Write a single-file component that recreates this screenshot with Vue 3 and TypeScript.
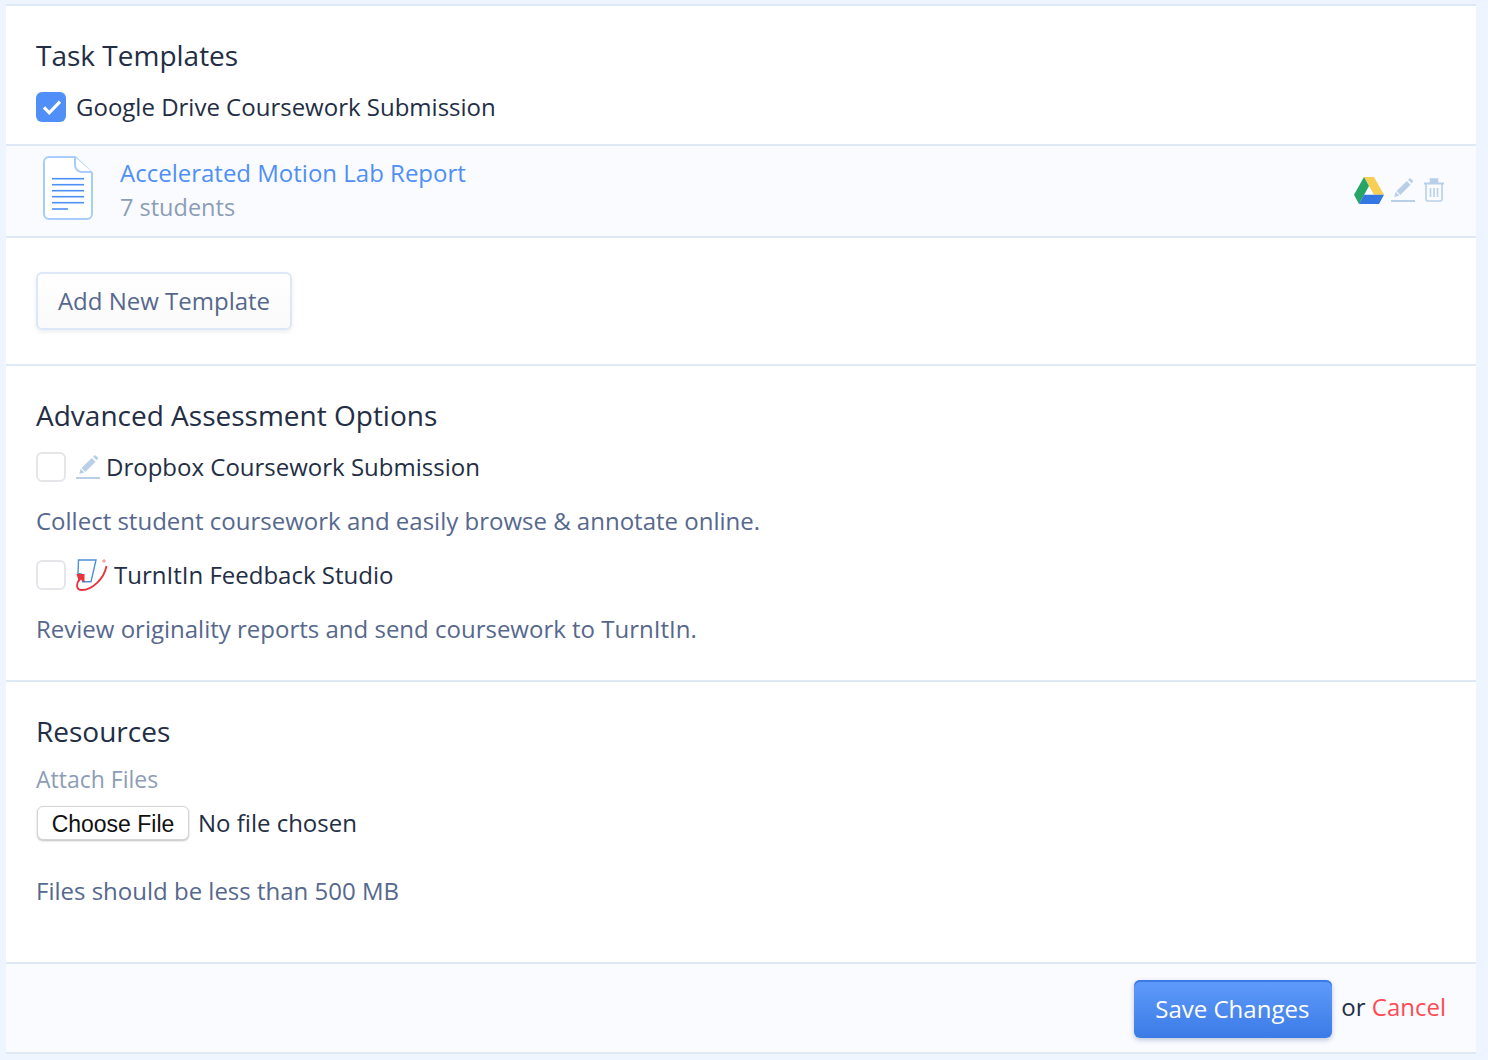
<script setup lang="ts">
const lines: number[] = [22.7, 28.7, 34.7, 40.7, 46.7]
</script>

<template>
  <div class="page">
    <form class="card">
      <section class="sec sec-task">
        <h2>Task Templates</h2>
        <label class="check-row">
          <span class="box on">
            <svg viewBox="0 0 30 30" width="30" height="30"><path d="M8 15.300l5.300 5.500L24 9.700" fill="none" stroke="#fff" stroke-width="3.200" /></svg>
          </span>
          <span>Google Drive Coursework Submission</span>
        </label>
      </section>

      <div class="tpl">
        <svg class="doc" viewBox="0 0 50 64" width="50" height="64">
          <path d="M6 1h26l17 16v41a5 5 0 0 1-5 5H6a5 5 0 0 1-5-5V6a5 5 0 0 1 5-5z" fill="#fff" stroke="#a9cdfb" stroke-width="2" />
          <path d="M32 1v8a7 7 0 0 0 7 7h10" fill="#fff" stroke="#a9cdfb" stroke-width="2" />
          <path v-for="y in lines" :key="y" :d="`M9 ${y}h32`" stroke="#4d8ff5" stroke-width="1.600" />
          <path d="M9 53h16" stroke="#4d8ff5" stroke-width="1.600" />
        </svg>
        <div class="tpl-text">
          <a class="tpl-name">Accelerated Motion Lab Report</a>
          <div class="tpl-sub">7 students</div>
        </div>
        <div class="tpl-actions">
          <svg class="drive" viewBox="0 0 30 26" width="30" height="27" preserveAspectRatio="none">
            <path d="M10 0h10l10 17h-10z" fill="#f8cf55" />
            <path d="M10 0l5 8.600L5 26 0 17z" fill="#27a567" />
            <path d="M5 26l5-9h20l-5 9z" fill="#3477e3" />
          </svg>
          <svg class="pen" viewBox="0 0 24 24" width="24" height="24">
            <path d="M3.200 19l1.500-5.200 3.700 3.700z" fill="#b9cfe8" />
            <path d="M5.500 13L15.800 2.900l3.800 3.800L9.300 17z" fill="#b9cfe8" />
            <path d="M17 1.700l1-1a1.500 1.500 0 0 1 2 0l1.600 1.600a1.500 1.500 0 0 1 0 2l-1 1z" fill="#b9cfe8" />
            <path d="M0 23h24" stroke="#b9cfe8" stroke-width="2" />
          </svg>
          <svg class="trash" viewBox="0 0 22 24" width="22" height="24" fill="none" stroke="#b9cfe8" stroke-width="1.600">
            <path d="M1 5.500h20" stroke-width="2" />
            <path d="M7.500 1h7v3.500h-7z" fill="#b9cfe8" />
            <path d="M3 6v15a2 2 0 0 0 2 2h12a2 2 0 0 0 2-2V6" />
            <path d="M7.500 10v9M11 10v9M14.500 10v9" />
          </svg>
        </div>
      </div>

      <section class="sec sec-add">
        <button type="button" class="btn-add">Add New Template</button>
      </section>

      <section class="sec sec-adv">
        <h2>Advanced Assessment Options</h2>
        <label class="check-row">
          <span class="box"></span>
          <svg class="pen" viewBox="0 0 24 24" width="24" height="24">
            <path d="M3.200 19l1.500-5.200 3.700 3.700z" fill="#b9cfe8" />
            <path d="M5.500 13L15.800 2.900l3.800 3.800L9.300 17z" fill="#b9cfe8" />
            <path d="M17 1.700l1-1a1.500 1.500 0 0 1 2 0l1.600 1.600a1.500 1.500 0 0 1 0 2l-1 1z" fill="#b9cfe8" />
            <path d="M0 23h24" stroke="#b9cfe8" stroke-width="2" />
          </svg>
          <span>Dropbox Coursework Submission</span>
        </label>
        <p class="desc">Collect student coursework and easily browse &amp; annotate online.</p>
        <label class="check-row">
          <span class="box"></span>
          <svg class="tii" viewBox="0 0 32 32" width="32" height="32">
            <path d="M2.500 1h17.500L15 22.700H6.500L5.500 15 2 14.500z" fill="#fff" stroke="#4f8fd6" stroke-width="1.400" />
            <path d="M.5 15h8v8.500L5 20.500 3 23z" fill="#e8323c" />
            <path d="M3.500 20C-.5 26 .5 31 6 31c10 0 22-11 24.500-24" fill="none" stroke="#e8323c" stroke-width="1.800" />
            <circle cx="28" cy="2" r="1.200" fill="none" stroke="#e8323c" stroke-width=".6" />
          </svg>
          <span>TurnItIn Feedback Studio</span>
        </label>
        <p class="desc">Review originality reports and send coursework to TurnItIn.</p>
      </section>

      <section class="sec sec-res">
        <h2>Resources</h2>
        <div class="attach">Attach Files</div>
        <div class="file-row">
          <button type="button" class="btn-file">Choose File</button>
          <span>No file chosen</span>
        </div>
        <p class="desc hint">Files should be less than 500 MB</p>
      </section>

      <footer class="foot">
        <button type="button" class="btn-save">Save Changes</button>
        <span class="or">or <a class="cancel">Cancel</a></span>
      </footer>
    </form>
  </div>
</template>

<style>
html, body { background: #eff5fe; }
</style>

<style scoped>
.page {
  box-sizing: border-box;
  height: 1060px;
  padding: 4px 12px 6px 6px;
  overflow: hidden;
  font-family: "Open Sans", sans-serif;
  font-size: 24px;
  line-height: 36px;
  color: #232e45;
}
.card {
  background: #fff;
  border-top: 2px solid #dfe9f6;
  border-bottom: 2px solid #dfe9f6;
}
.sec { box-sizing: border-box; padding: 0 30px; }
.sec + .sec { border-top: 2px solid #dfe9f6; }
h2 {
  margin: 0 0 14px;
  font-size: 28px;
  line-height: 40px;
  font-weight: 400;
  color: #232e45;
}
.sec-task { height: 138px; padding-top: 29px; }
.check-row { display: flex; align-items: center; height: 36px; }
.box {
  box-sizing: border-box;
  width: 30px;
  height: 30px;
  flex: none;
  margin-right: 10px;
  border: 2px solid #e4e6e9;
  border-radius: 6px;
  background: #fff;
}
.box.on { border: 0; background: #4f8ff7; display: block; }
.box svg { display: block; }
.tpl {
  box-sizing: border-box;
  display: flex;
  align-items: center;
  height: 94px;
  padding: 0 31px 0 37px;
  background: #fafbff;
  border-top: 2px solid #dfe9f6;
  border-bottom: 2px solid #dfe9f6;
}
.doc { flex: none; margin: -6px 27px 0 0; }
.tpl-text { flex: 1; margin-top: -2px; }
.tpl-name { display: block; color: #4f8ff7; line-height: 34px; }
.tpl-sub { color: #8c9db5; font-size: 23.500px; line-height: 34px; }
.tpl-actions { display: flex; align-items: center; margin-top: -2px; }
.drive { margin-right: 7px; }
.pen { flex: none; margin-right: 6px; }
.tpl-actions .pen { margin-right: 8px; }
.sec-add { height: 126px; padding-top: 34px; border-top: 0 !important; }
.btn-add {
  box-sizing: border-box;
  width: 256px;
  height: 58px;
  padding: 0;
  border: 2px solid #dce8f7;
  border-radius: 6px;
  background: linear-gradient(#fff, #fafafa);
  box-shadow: 0 2px 4px rgba(60, 80, 120, .1);
  font: inherit;
  color: #56688d;
}
.sec-adv { height: 316px; padding-top: 29px; }
.tii { flex: none; margin-right: 6px; }
.desc { margin: 18px 0; color: #56688d; }
.sec-res { height: 282px; padding-top: 29px; }
.attach { margin-top: -4px; font-size: 23px; color: #8c9db5; }
.file-row { display: flex; align-items: center; margin-top: 8px; height: 36px; }
.btn-file {
  box-sizing: border-box;
  width: 152px;
  height: 34px;
  margin: 0 9px 0 1px;
  padding: 2px 0 0;
  border: 1px solid #d4d4d4;
  border-radius: 6px;
  background: #fff;
  box-shadow: 0 1px 2px rgba(0, 0, 0, .25);
  font-family: "Liberation Sans", sans-serif;
  font-size: 23px;
  color: #111;
}
.hint { margin: 32px 0 0; }
.foot {
  box-sizing: border-box;
  display: flex;
  align-items: center;
  justify-content: flex-end;
  height: 90px;
  padding: 2px 30px 0;
  background: #fafbff;
  border-top: 2px solid #dfe9f6;
}
.btn-save {
  box-sizing: border-box;
  width: 198px;
  height: 58px;
  padding: 0 2px 0 0;
  margin-right: 9px;
  border: 0;
  border-radius: 6px;
  background: linear-gradient(#5f9bfb, #3b7be6);
  box-shadow: inset 0 2px 0 #3a7ae6, 0 2px 5px rgba(40, 70, 130, .3);
  font: inherit;
  color: #fff;
}
.or { margin-top: -4px; }
.cancel { color: #ff4a55; }
</style>
